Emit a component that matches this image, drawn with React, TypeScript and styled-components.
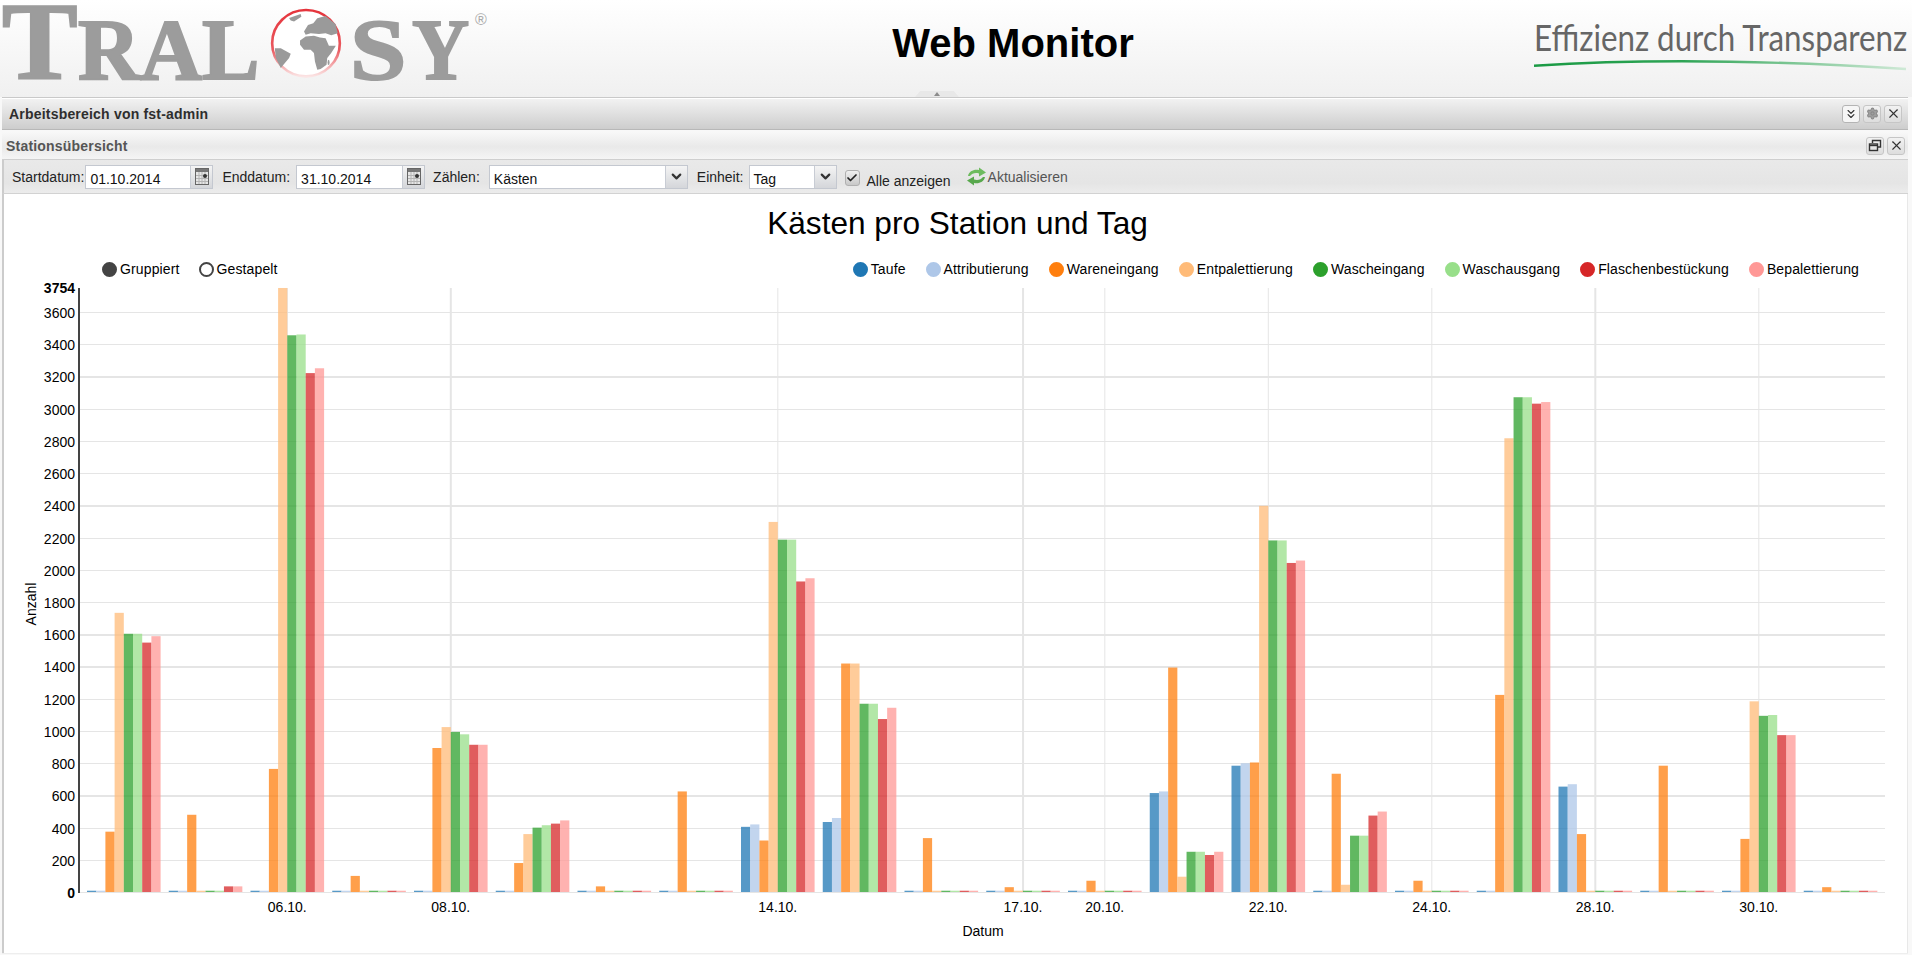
import React from 'react';
import styled, { createGlobalStyle } from 'styled-components';
import { ChevronDown, ChevronsDown, Check, Settings, X } from 'lucide-react';

const GlobalStyle = createGlobalStyle`
  html, body {
    margin: 0;
    padding: 0;
    background: #f8f8f8;
    overflow: hidden;
  }

  body {
    font-family: 'Liberation Sans', Arial, sans-serif;
    color: #000;
  }
`;

const Page = styled.div`
  width: 1912px;
  height: 955px;
  overflow: hidden;
`;

/* header */

const Header = styled.header`
  position: relative;
  display: flex;
  height: 97px;
  background: linear-gradient(#ffffff, #f0f0f0);
`;

const Logo = styled.div`
  display: flex;
  align-items: baseline;
  width: 492px;
  height: 84px;
  padding-left: 2px;
  box-sizing: border-box;
  font-family: 'Liberation Serif', serif;
  font-weight: 700;
  color: #9c9c9c;
  -webkit-text-stroke: 2px #9c9c9c;
`;

const LogoLetter = styled.span<{ $size: number; $width: number; $height: number; $stretch?: number }>`
  display: inline-block;
  width: ${({ $width }) => $width}px;
  font-size: ${({ $size }) => $size}px;
  line-height: ${({ $height }) => $height}px;
  transform: scaleX(${({ $stretch }) => $stretch ?? 1});
  transform-origin: left;
`;

const Registered = styled.span`
  align-self: flex-start;
  margin: 11px 0 0 2px;
  font-family: 'Liberation Sans', sans-serif;
  font-size: 16px;
  line-height: 18px;
  font-weight: 400;
  color: #aaa;
  -webkit-text-stroke: 0;
`;

const Title = styled.h1`
  flex: 1;
  margin: 20px 0 0;
  font-size: 40px;
  line-height: 46px;
  font-weight: 700;
  text-align: center;
`;

const Tagline = styled.div`
  width: 378px;
  padding-top: 15px;
`;

const TaglineText = styled.div`
  font-family: 'Lato', sans-serif;
  font-size: 36px;
  line-height: 44px;
  color: #666;
  white-space: nowrap;
  transform: scaleX(0.87);
  transform-origin: left;
`;

const Underline = styled.svg`
  display: block;
  margin-top: 1px;
`;

const CollapseHandle = styled.div`
  position: absolute;
  left: 915px;
  bottom: 0;
  width: 44px;
  height: 6px;
  background: #e8e8e8;
  clip-path: polygon(12% 0, 88% 0, 100% 100%, 0 100%);
  display: flex;
  justify-content: center;
  padding-top: 1px;
  box-sizing: border-box;

  &::after {
    content: '';
    width: 0;
    height: 0;
    border-left: 3px solid transparent;
    border-right: 3px solid transparent;
    border-bottom: 4px solid #8c8c8c;
  }
`;

/* window */

const Desk = styled.main`
  width: 1906px;
  height: 857px;
  margin-left: 2px;
  box-sizing: border-box;
  border-bottom: 1px solid #eee;
  display: flex;
  flex-direction: column;
`;

const WorkspaceBar = styled.div`
  display: flex;
  align-items: center;
  justify-content: space-between;
  height: 33px;
  box-sizing: border-box;
  padding: 0 6px 0 7px;
  border-top: 1px solid #c9c9c9;
  border-bottom: 1px solid #b8b8b8;
  box-shadow: inset 0 1px 0 #fff;
  background: linear-gradient(#f3f3f3, #cdcdcd);
  font-size: 14px;
  font-weight: 700;
  letter-spacing: 0.2px;
  color: #2e2e2e;
`;

const PanelBar = styled.div`
  display: flex;
  align-items: center;
  justify-content: space-between;
  height: 28px;
  box-sizing: border-box;
  margin-top: 2px;
  padding: 0 3px 0 4px;
  border-bottom: 1px solid #cfcfcf;
  background: linear-gradient(#f8f8f8, #e9e9e9 55%, #f5f5f5);
  font-size: 14px;
  font-weight: 700;
  letter-spacing: 0.2px;
  color: #555;
`;

const BarActions = styled.div`
  display: flex;
  gap: 3px;
`;

const BarButton = styled.div<{ $active?: boolean }>`
  display: flex;
  align-items: center;
  justify-content: center;
  width: 18px;
  height: 18px;
  box-sizing: border-box;
  border: 1px solid ${({ $active }) => ($active ? '#b4b4b4' : '#c6c6c6')};
  border-radius: 3px;
  background: ${({ $active }) => ($active ? '#f6f6f6' : 'linear-gradient(#f2f2f2, #dddddd)')};
  color: #333;
`;

const Toolbar = styled.div`
  display: flex;
  align-items: center;
  height: 34px;
  box-sizing: border-box;
  padding-left: 8px;
  border-left: 2px solid #ccc;
  border-bottom: 1px solid #d2d2d2;
  background: linear-gradient(#e9e9e9, #e5e5e5 70%, #ececec);
  font-size: 14px;
  color: #222;
`;

const ToolLabel = styled.span<{ $left?: number }>`
  margin-left: ${({ $left }) => $left ?? 0}px;
  white-space: nowrap;
`;

const Field = styled.div<{ $left: number; $width: number }>`
  display: flex;
  width: ${({ $width }) => $width}px;
  height: 24px;
  margin-left: ${({ $left }) => $left}px;
  box-sizing: border-box;
  border: 1px solid #c4c8d0;
  background: #fff;
`;

const FieldValue = styled.div`
  flex: 1;
  padding: 5px 0 0 4px;
  font-size: 14px;
  line-height: 16px;
  color: #111;
`;

const FieldButton = styled.div`
  display: flex;
  align-items: center;
  justify-content: center;
  width: 21px;
  background: linear-gradient(#f4f4f4, #d4d6da);
  border-left: 1px solid #c8ccd4;
  color: #333;
`;

const CheckBox = styled.div`
  display: flex;
  align-items: center;
  justify-content: center;
  width: 13px;
  height: 14px;
  margin: 2px 0 0 8px;
  border: 1px solid #b0b0b0;
  border-radius: 3px;
  background: linear-gradient(#f0f0f0, #c8c8c8);
  color: #222;
`;

const CheckLabel = styled.span`
  margin: 8px 0 0 7px;
  white-space: nowrap;
`;

const RefreshButton = styled.div`
  display: flex;
  align-items: center;
  gap: 1px;
  margin-left: 15px;
  color: #555;
  white-space: nowrap;
`;

/* chart */

const ChartPanel = styled.section`
  flex: 1;
  display: flex;
  flex-direction: column;
  background: #fff;
  border-left: 2px solid #ccc;
  border-right: 1px solid #e8e8e8;
`;

const ChartTitle = styled.h2`
  margin: 11px 0 0;
  padding-left: 4px;
  font-size: 31.6px;
  line-height: 36px;
  font-weight: 400;
  text-align: center;
`;

const LegendRow = styled.div`
  display: flex;
  justify-content: space-between;
  margin-top: 20px;
  padding: 0 48px 0 98px;
  font-size: 14px;
  line-height: 16px;
  letter-spacing: 0.13px;
`;

const LegendGroup = styled.div<{ $gap: number }>`
  display: flex;
  gap: ${({ $gap }) => $gap}px;
`;

const LegendItem = styled.div`
  display: flex;
  align-items: center;
  gap: 3px;
  white-space: nowrap;
`;

const Dot = styled.span<{ $color: string; $hollow?: boolean }>`
  width: 15px;
  height: 15px;
  box-sizing: border-box;
  border-radius: 50%;
  border: 2.5px solid ${({ $color }) => $color};
  background: ${({ $color, $hollow }) => ($hollow ? '#fff' : $color)};
`;

const Plot = styled.svg`
  display: block;
  margin-top: 1px;
  font-family: 'Liberation Sans', Arial, sans-serif;
  font-size: 14px;
`;

const AxisText = styled.text<{ $bold?: boolean }>`
  font-weight: ${({ $bold }) => ($bold ? 700 : 400)};
  fill: #000;
`;

const STATIONS = [
  { name: 'Taufe', color: '#1f77b4' },
  { name: 'Attributierung', color: '#aec7e8' },
  { name: 'Wareneingang', color: '#ff7f0e' },
  { name: 'Entpalettierung', color: '#ffbb78' },
  { name: 'Wascheingang', color: '#2ca02c' },
  { name: 'Waschausgang', color: '#98df8a' },
  { name: 'Flaschenbestückung', color: '#d62728' },
  { name: 'Bepalettierung', color: '#ff9896' },
];

const DAYS: number[][] = [
  [8, 8, 375, 1735, 1605, 1605, 1550, 1590],
  [8, 8, 480, 8, 8, 8, 35, 35],
  [8, 8, 765, 3754, 3460, 3465, 3225, 3255],
  [8, 8, 100, 8, 8, 8, 8, 8],
  [8, 8, 895, 1025, 995, 980, 915, 915],
  [8, 8, 180, 360, 400, 415, 425, 445],
  [8, 8, 35, 8, 8, 8, 8, 8],
  [8, 8, 625, 8, 8, 8, 8, 8],
  [405, 420, 320, 2300, 2190, 2190, 1930, 1950],
  [435, 460, 1420, 1420, 1170, 1170, 1075, 1145],
  [8, 8, 335, 8, 8, 8, 8, 8],
  [8, 8, 30, 8, 8, 8, 8, 8],
  [8, 8, 70, 8, 8, 8, 8, 8],
  [615, 625, 1395, 95, 250, 250, 230, 250],
  [785, 800, 805, 2400, 2185, 2185, 2045, 2060],
  [8, 8, 735, 45, 350, 350, 475, 500],
  [8, 8, 70, 8, 8, 8, 8, 8],
  [8, 8, 1225, 2820, 3075, 3075, 3035, 3045],
  [655, 670, 360, 8, 8, 8, 8, 8],
  [8, 8, 785, 8, 8, 8, 8, 8],
  [8, 8, 330, 1185, 1095, 1100, 975, 975],
  [8, 8, 30, 8, 8, 8, 8, 8],
];

const Y_TICKS = [
  { value: 3600, y: 312.5 },
  { value: 3400, y: 344.5 },
  { value: 3200, y: 377, thick: true },
  { value: 3000, y: 409.5 },
  { value: 2800, y: 441.5 },
  { value: 2600, y: 473.5 },
  { value: 2400, y: 506, thick: true },
  { value: 2200, y: 538.5 },
  { value: 2000, y: 570.5 },
  { value: 1800, y: 602.5 },
  { value: 1600, y: 635, thick: true },
  { value: 1400, y: 667, thick: true },
  { value: 1200, y: 699.5 },
  { value: 1000, y: 731.5 },
  { value: 800, y: 763.5 },
  { value: 600, y: 796, thick: true },
  { value: 400, y: 828.5 },
  { value: 200, y: 860.5 },
  { value: 0, y: 892.5 },
];

const X_TICKS = [
  { day: 2, label: '06.10.' },
  { day: 4, label: '08.10.', thick: true },
  { day: 8, label: '14.10.' },
  { day: 11, label: '17.10.', thick: true },
  { day: 12, label: '20.10.' },
  { day: 14, label: '22.10.' },
  { day: 16, label: '24.10.' },
  { day: 18, label: '28.10.', thick: true },
  { day: 20, label: '30.10.' },
];

const BASE_Y = 892;
const PX_PER_UNIT = 0.1609;
const GROUP_X = 87;
const GROUP_STEP = 81.75;
const BAR_W = 9.2;
const groupCenter = (day: number) => GROUP_X + day * GROUP_STEP + BAR_W * 4;

const Globe: React.FC = () => (
  <svg width={74} height={71} viewBox="28 14 216 214" style={{ marginBottom: -3, marginRight: 7 }}>
    <defs>
      <linearGradient id="ring" x1="0" y1="0" x2="0" y2="1">
        <stop offset="0" stopColor="#e5343c" />
        <stop offset="0.6" stopColor="#ea5a60" />
        <stop offset="1" stopColor="#fbe4e4" />
      </linearGradient>
    </defs>
    <ellipse cx="136" cy="120" rx="102" ry="100" fill="#fff" stroke="url(#ring)" strokeWidth="8" />
    <g fill="#9a9a9a">
      <path d="M118 112 L135 100 L160 98 L178 103 L195 105 L205 128 L226 128 L212 150 L200 165 L198 185 L180 198 L170 200 L163 175 L160 150 L150 140 L130 140 L118 125 Z" />
      <path d="M130 85 L142 65 L158 60 L170 45 L195 38 L225 62 L232 90 L212 96 L195 90 L175 92 L150 90 L135 95 Z" />
      <path d="M85 44 L120 32 L122 40 L100 55 L90 52 Z" />
      <path d="M42 135 L60 135 L90 152 L85 165 L68 185 L60 195 L45 165 Z" />
      <ellipse cx="204" cy="178" rx="3" ry="8" />
    </g>
  </svg>
);

const CalendarIcon: React.FC = () => (
  <svg width={14} height={17} viewBox="0 0 14 17">
    <rect x="0.5" y="0.5" width="13" height="16" fill="#e6e6e6" stroke="#666" />
    <rect x="1" y="1" width="12" height="3" fill="#777" />
    <path d="M1 7.5H13M1 10.5H13M1 13.5H13M4 4V16M7 4V16M10 4V16" stroke="#b4b4b4" />
    <circle cx="10" cy="8" r="2" fill="#333" />
  </svg>
);

const RestoreIcon: React.FC = () => (
  <svg width={14} height={14} viewBox="0 0 14 14" fill="none" stroke="#333" strokeWidth="1.4">
    <path d="M4.5 4V1.5H12.5V8H10" />
    <rect x="1.5" y="5" width="8" height="6.5" />
    <path d="M1.5 6.5H9.5" />
  </svg>
);

const RefreshArrows: React.FC = () => (
  <svg width={21} height={19} viewBox="0 0 21 19">
    <path d="M2 9 C3 4 8 2 13 3 L13 0.5 L20 5.5 L13 9.5 L13 6.5 C9 5.5 6 6.5 4 9 Z" fill="#6dbb5e" />
    <path d="M19 10 C18 15 13 17 8 16 L8 18.5 L1 13.5 L8 9.5 L8 12.5 C12 13.5 15 12.5 17 10 Z" fill="#58a84d" />
  </svg>
);

const ChartPlot: React.FC = () => (
  <Plot width={1903} height={675} viewBox="4 278 1903 675">
    {Y_TICKS.map((t) => (
      <line key={t.value} x1={80} x2={1885} y1={t.y} y2={t.y} stroke="#e5e5e5" strokeWidth={t.thick ? 2 : 1} />
    ))}
    {X_TICKS.map((t) => (
      <line
        key={t.label}
        x1={groupCenter(t.day)}
        x2={groupCenter(t.day)}
        y1={288}
        y2={892}
        stroke="#e5e5e5"
        strokeWidth={t.thick ? 2 : 1}
      />
    ))}
    {DAYS.map((values, day) =>
      values.map((value, s) => (
        <rect
          key={`${day}-${s}`}
          x={GROUP_X + day * GROUP_STEP + s * BAR_W}
          y={BASE_Y - value * PX_PER_UNIT}
          width={BAR_W}
          height={value * PX_PER_UNIT}
          fill={STATIONS[s].color}
          fillOpacity={0.75}
        />
      )),
    )}
    <line x1={79} x2={79} y1={288} y2={893} stroke="#444" strokeWidth={2} />
    <AxisText $bold x={75} y={293} textAnchor="end">
      3754
    </AxisText>
    {Y_TICKS.map((t) => (
      <AxisText key={t.value} $bold={t.value === 0} x={75} y={t.y + 5} textAnchor="end">
        {t.value}
      </AxisText>
    ))}
    {X_TICKS.map((t) => (
      <AxisText key={t.label} x={groupCenter(t.day)} y={912} textAnchor="middle">
        {t.label}
      </AxisText>
    ))}
    <AxisText x={983} y={936} textAnchor="middle">
      Datum
    </AxisText>
    <AxisText transform="translate(36 604) rotate(-90)" textAnchor="middle">
      Anzahl
    </AxisText>
  </Plot>
);

const App: React.FC = () => {
  return (
    <Page>
      <GlobalStyle />
      <Header>
        <Logo>
          <LogoLetter $size={110} $height={84} $width={76} $stretch={1.03}>T</LogoLetter>
          <LogoLetter $size={86} $height={60} $width={62}>R</LogoLetter>
          <LogoLetter $size={86} $height={60} $width={62}>A</LogoLetter>
          <LogoLetter $size={86} $height={60} $width={67}>L</LogoLetter>
          <Globe />
          <LogoLetter $size={86} $height={60} $width={62} $stretch={1.18}>S</LogoLetter>
          <LogoLetter $size={86} $height={60} $width={61} $stretch={0.92}>Y</LogoLetter>
          <Registered>®</Registered>
        </Logo>
        <Title>Web Monitor</Title>
        <Tagline>
          <TaglineText>Effizienz durch Transparenz</TaglineText>
          <Underline width={374} height={11} viewBox="0 0 374 11">
            <defs>
              <linearGradient id="stroke" x1="0" y1="0" x2="1" y2="0">
                <stop offset="0" stopColor="#1a9a44" />
                <stop offset="0.4" stopColor="#2ea455" />
                <stop offset="1" stopColor="#cfe9d6" />
              </linearGradient>
            </defs>
            <path d="M0 5.7 C50 2.5 100 1.2 148 1.2 C230 1.2 310 5 372 9" fill="none" stroke="url(#stroke)" strokeWidth="2.4" />
          </Underline>
        </Tagline>
        <CollapseHandle />
      </Header>
      <Desk>
        <WorkspaceBar>
          Arbeitsbereich von fst-admin
          <BarActions>
            <BarButton $active>
              <ChevronsDown size={14} strokeWidth={2} />
            </BarButton>
            <BarButton>
              <Settings size={13} color="#8a8a8a" fill="#a0a0a0" />
            </BarButton>
            <BarButton>
              <X size={15} strokeWidth={1.8} />
            </BarButton>
          </BarActions>
        </WorkspaceBar>
        <PanelBar>
          Stationsübersicht
          <BarActions>
            <BarButton>
              <RestoreIcon />
            </BarButton>
            <BarButton>
              <X size={15} strokeWidth={1.8} />
            </BarButton>
          </BarActions>
        </PanelBar>
        <Toolbar>
          <ToolLabel>Startdatum:</ToolLabel>
          <Field $left={1} $width={128}>
            <FieldValue>01.10.2014</FieldValue>
            <FieldButton>
              <CalendarIcon />
            </FieldButton>
          </Field>
          <ToolLabel $left={9}>Enddatum:</ToolLabel>
          <Field $left={6} $width={129}>
            <FieldValue>31.10.2014</FieldValue>
            <FieldButton>
              <CalendarIcon />
            </FieldButton>
          </Field>
          <ToolLabel $left={8}>Zählen:</ToolLabel>
          <Field $left={9} $width={199}>
            <FieldValue>Kästen</FieldValue>
            <FieldButton>
              <ChevronDown size={15} strokeWidth={3.5} />
            </FieldButton>
          </Field>
          <ToolLabel $left={9}>Einheit:</ToolLabel>
          <Field $left={5} $width={88}>
            <FieldValue>Tag</FieldValue>
            <FieldButton>
              <ChevronDown size={15} strokeWidth={3.5} />
            </FieldButton>
          </Field>
          <CheckBox>
            <Check size={12} strokeWidth={3.5} />
          </CheckBox>
          <CheckLabel>Alle anzeigen</CheckLabel>
          <RefreshButton>
            <RefreshArrows />
            Aktualisieren
          </RefreshButton>
        </Toolbar>
        <ChartPanel>
          <ChartTitle>Kästen pro Station und Tag</ChartTitle>
          <LegendRow>
            <LegendGroup $gap={19}>
              <LegendItem>
                <Dot $color="#444" />
                Gruppiert
              </LegendItem>
              <LegendItem>
                <Dot $color="#444" $hollow />
                Gestapelt
              </LegendItem>
            </LegendGroup>
            <LegendGroup $gap={20}>
              {STATIONS.map((s) => (
                <LegendItem key={s.name}>
                  <Dot $color={s.color} />
                  {s.name}
                </LegendItem>
              ))}
            </LegendGroup>
          </LegendRow>
          <ChartPlot />
        </ChartPanel>
      </Desk>
    </Page>
  );
};

export default App;
